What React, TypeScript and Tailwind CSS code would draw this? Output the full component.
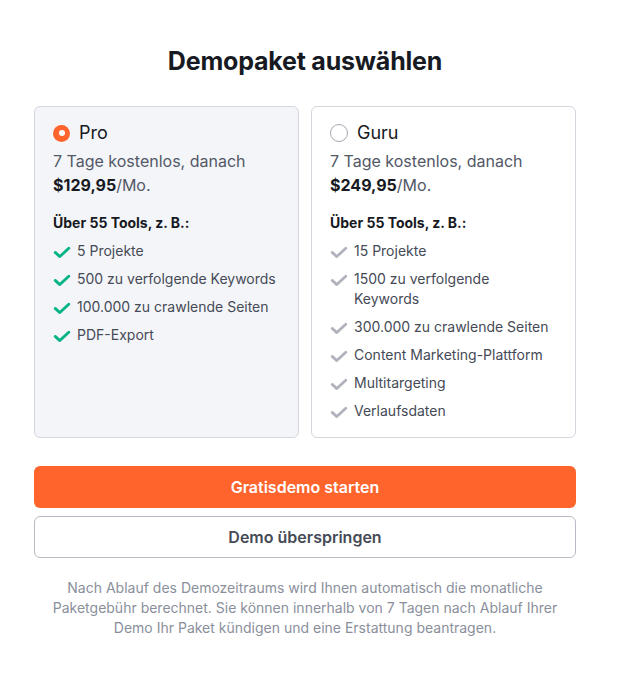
import React from "react";

function Check({ color }: { color: string }) {
  return (
    <svg width="18" height="14" viewBox="0 0 18 14" className="shrink-0 mt-[4px]">
      <path d="M2.2 7.4 L6.8 11.6 L15.8 3.2" fill="none" stroke={color} strokeWidth="2.8" strokeLinecap="round" strokeLinejoin="round" />
    </svg>
  );
}

type Plan = {
  name: string;
  price: string;
  selected: boolean;
  items: string[];
};

const plans: Plan[] = [
  {
    name: "Pro",
    price: "$129,95",
    selected: true,
    items: ["5 Projekte", "500 zu verfolgende Keywords", "100.000 zu crawlende Seiten", "PDF-Export"],
  },
  {
    name: "Guru",
    price: "$249,95",
    selected: false,
    items: [
      "15 Projekte",
      "1500 zu verfolgende Keywords",
      "300.000 zu crawlende Seiten",
      "Content Marketing-Plattform",
      "Multitargeting",
      "Verlaufsdaten",
    ],
  },
];

function Card({ plan }: { plan: Plan }) {
  return (
    <div
      className={
        plan.selected
          ? "flex-1 min-w-0 rounded-[6px] border border-[#d3d6dd] bg-[#f4f5f9] pl-[18px] pr-[20px] pt-[12px] pb-[16px]"
          : "flex-1 min-w-0 rounded-[6px] border border-[#d3d6dd] bg-white pl-[18px] pr-[20px] pt-[12px] pb-[16px]"
      }
    >
      <div className="flex items-center h-[28px]">
        {plan.selected ? (
          <span className="w-[17px] h-[17px] rounded-full bg-[#ff642d] flex items-center justify-center">
            <span className="w-[6px] h-[6px] rounded-full bg-white" />
          </span>
        ) : (
          <span className="w-[18px] h-[18px] rounded-full border border-[#a6a9b2] bg-white" />
        )}
        <span className="ml-[9px] text-[18px] leading-[28px] text-[#171a22]">{plan.name}</span>
      </div>
      <div className="mt-[2px] text-[16px] leading-[24px] text-[#525866]">7 Tage kostenlos, danach</div>
      <div className="text-[16px] leading-[24px] text-[#525866]">
        <span className="font-bold text-[#171a22]">{plan.price}</span>/Mo.
      </div>
      <div className="mt-[16px] text-[14px] leading-[20px] font-bold text-[#171a22]">Über 55 Tools, z. B.:</div>
      <ul className="mt-[8px] flex flex-col gap-[8px]">
        {plan.items.map((it) => (
          <li key={it} className="flex items-start gap-[6px] text-[14px] leading-[20px] text-[#454a56]">
            <Check color={plan.selected ? "#00b385" : "#b0b3bb"} />
            <span>{it}</span>
          </li>
        ))}
      </ul>
    </div>
  );
}

export default function App() {
  return (
    <div className="w-[624px] min-h-[676px] bg-white" style={{ fontFamily: "Inter, 'Noto Sans', sans-serif" }}>
      <div className="ml-[34px] w-[542px] pt-[44px]">
        <h1 className="text-center text-[25px] leading-[34px] font-bold text-[#171a22] tracking-[-0.2px]">
          Demopaket auswählen
        </h1>
        <div className="mt-[28px] flex gap-[12px] items-stretch">
          {plans.map((p) => (
            <Card key={p.name} plan={p} />
          ))}
        </div>
        <button className="mt-[28px] w-full h-[42px] rounded-[6px] bg-[#ff642d] text-white text-[16px] font-semibold">
          Gratisdemo starten
        </button>
        <button className="mt-[8px] w-full h-[42px] rounded-[6px] border border-[#b8bbc3] bg-white text-[#454a56] text-[16px] font-semibold">
          Demo überspringen
        </button>
        <p className="mt-[20px] px-[12px] text-center text-[14px] leading-[20px] text-[#8a8f9b]">
          Nach Ablauf des Demozeitraums wird Ihnen automatisch die monatliche Paketgebühr berechnet. Sie können
          innerhalb von 7 Tagen nach Ablauf Ihrer Demo Ihr Paket kündigen und eine Erstattung beantragen.
        </p>
      </div>
    </div>
  );
}
